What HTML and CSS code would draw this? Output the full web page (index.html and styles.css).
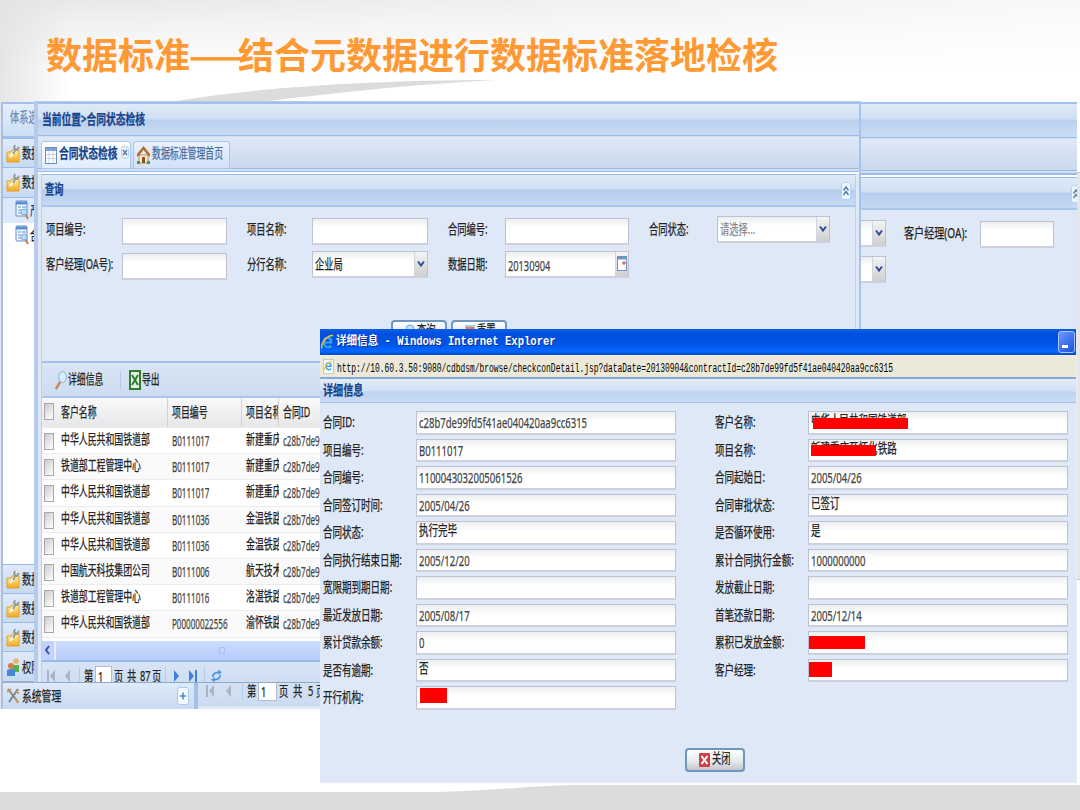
FILE: index.html
```html
<!DOCTYPE html>
<html lang="zh-CN">
<head>
    <meta charset="UTF-8">
    <title>数据标准</title>
    <link rel="stylesheet" href="styles.css">
</head>
<body>
<svg class="defs" width="0" height="0">
    <linearGradient id="gold" x1="0" y1="0" x2="0" y2="1"><stop offset="0" stop-color="#fff0a0"/><stop offset="1" stop-color="#f0a91e"/></linearGradient>
    <symbol id="folder" viewBox="0 0 14 20">
        <path d="M1 9h4l1-2h7v12H1z" fill="url(#gold)" stroke="#e0a030"/>
        <path d="M4 14l6-7" stroke="#fff" stroke-width="2"/>
        <path d="M7 11l3-5M9 2l-1 3 3 2 2-3" fill="none" stroke="#8f959c" stroke-width="1.8"/>
    </symbol>
    <symbol id="doc" viewBox="0 0 14 20">
        <rect x="1" y="1" width="11" height="15" rx="1" fill="#f4f9ff" stroke="#5b8fd0"/>
        <path d="M1 3h11" stroke="#5b8fd0" stroke-width="3"/>
        <path d="M3 7h3M3 10h3M3 13h3M7 7h4" stroke="#5a90cf"/>
        <circle cx="9" cy="12" r="3" fill="#b9dcfa" stroke="#7ba9d8"/>
        <path d="M11 15l2 4" stroke="#d07a3a" stroke-width="2"/>
    </symbol>
    <symbol id="first" viewBox="0 0 9 14"><path d="M1 1v12" stroke="currentColor" stroke-width="2"/><path d="M8 1v12L3 7z" fill="currentColor"/></symbol>
    <symbol id="prev" viewBox="0 0 9 14"><path d="M7 1v12L2 7z" fill="currentColor"/></symbol>
    <symbol id="arrow" viewBox="0 0 8 8"><path d="M1 1l3 4 3-4" fill="none" stroke="#2f4f9c" stroke-width="2"/></symbol>
    <symbol id="collapse" viewBox="0 0 10 18">
        <rect x=".5" y=".5" width="9" height="17" rx="2" fill="#eef6ff" stroke="#b5d2f2"/>
        <path d="M2.500 8.500L5 5l2.500 3.500M2.500 13L5 9.500 7.500 13" fill="none" stroke="#4a7fae" stroke-width="1.400"/>
    </symbol>
    <symbol id="ie" viewBox="0 0 14 18">
        <path d="M11 13c-2 3-8 2-8-4s7-6 8-1v1.500H4" fill="none" stroke="#38a3ee" stroke-width="2.300"/>
        <path d="M1 16C-1 11 7 1 13 2" fill="none" stroke="#f5c531" stroke-width="1.600"/>
    </symbol>
</svg>

<div class="slide">
    <svg class="swoosh" width="1080" height="810">
        <path d="M170 102C250 88 370 80 495 80C420 84 340 92 262 102z" fill="#dcdcdc"/>
        <path d="M0 792H440C500 790 530 786 575 785H1080V810H0z" fill="#dcdcdc"/>
    </svg>
    <h1>数据标准<span class="dash">——</span>结合元数据进行数据标准落地检核</h1>

    <div class="win back">
        <div class="sidebar">
            <div class="side-tab"><span class="t">体系选</span></div>
            <div class="acc"><svg class="ic"><use href="#folder"/></svg><span class="t">数据</span></div>
            <div class="acc"><svg class="ic"><use href="#folder"/></svg><span class="t">数据</span></div>
            <div class="tree">
                <div class="node on"><svg class="ic"><use href="#doc"/></svg><span class="t">产品</span></div>
                <div class="node"><svg class="ic"><use href="#doc"/></svg><span class="t">合同</span></div>
            </div>
            <div class="acc"><svg class="ic"><use href="#folder"/></svg><span class="t">数据</span></div>
            <div class="acc"><svg class="ic"><use href="#folder"/></svg><span class="t">数据</span></div>
            <div class="acc"><svg class="ic"><use href="#folder"/></svg><span class="t">数据</span></div>
            <div class="acc">
                <svg class="ic" viewBox="0 0 14 20"><circle cx="10" cy="4" r="2.800" fill="#eab36c"/><path d="M6 8h7v7H7z" fill="#58b04c"/><circle cx="5" cy="9" r="3" fill="#d97c3b"/><path d="M1 13q4-2 8 0v6H1z" fill="#4289dc"/></svg>
                <span class="t">权限</span>
            </div>
            <div class="acc last">
                <svg class="ic" viewBox="0 0 14 20"><path d="M2 3l10 13M12 3L3 16" stroke="#7f868d" stroke-width="2"/><path d="M1 6l4-3M10 6l3 1M9 12l3 5" stroke="#c39c5c" stroke-width="2"/></svg>
                <span class="t">系统管理</span>
                <svg class="plus" viewBox="0 0 12 18"><rect x=".5" y=".5" width="11" height="17" rx="2" fill="#f2f8ff" stroke="#a9c9ee"/><path d="M3 9h6M6 5.500v7" stroke="#4e86c2" stroke-width="1.500"/></svg>
            </div>
        </div>
        <div class="main">
            <div class="bar"></div>
            <div class="tabs"></div>
            <div class="panel-title"><svg class="collapse"><use href="#collapse"/></svg></div>
            <div class="back-form">
                <div class="row">
                    <div class="field select"><b><svg><use href="#arrow"/></svg></b></div>
                    <span class="t lbl">客户经理(OA):</span>
                    <div class="field"></div>
                </div>
                <div class="row">
                    <div class="field select"><b><svg><use href="#arrow"/></svg></b></div>
                </div>
            </div>
            <div class="pager">
                <svg class="nav"><use href="#first"/></svg>
                <svg class="nav"><use href="#prev"/></svg>
                <i class="sep"></i>
                <span class="t w11">第</span><div class="page"><span class="t">1</span></div>
                <span class="t w14">页</span><span class="t w15">共</span><span class="t w8">5</span><span class="t">页</span>
            </div>
        </div>
    </div>

    <div class="win middle">
        <div class="bar"><span class="t b">当前位置&gt;合同状态检核</span></div>
        <div class="tabs">
            <div class="tab active">
                <svg width="12" height="17" viewBox="0 0 12 17"><rect x=".5" y=".5" width="11" height="16" fill="#fff" stroke="#6f8fb8"/><path d="M1 2.500h10" stroke="#7ea6da" stroke-width="3"/><path d="M1 7.500h10M1 11.500h10M4 4v12M8 4v12" stroke="#c5d3e4"/></svg>
                <span class="t b">合同状态检核</span>
                <svg class="x" width="8" height="14" viewBox="0 0 8 14"><rect x=".5" y=".5" width="7" height="12" rx="2" fill="#e6f0fc" stroke="#b4d0f0"/><path d="M2 4l4 5M6 4L2 9" stroke="#4e78a8" stroke-width="1.300"/></svg>
            </div>
            <div class="tab">
                <svg width="13" height="18" viewBox="0 0 13 18"><path d="M2 9h9v8H2z" fill="#f5ead3" stroke="#b59466"/><path d="M0 10l6.500-8 6.500 8" fill="none" stroke="#b36c2b" stroke-width="2.500"/><path d="M5 11h3v6H5z" fill="#8b5229"/><path d="M0 15h3v3H0zM10 15h3v3h-3z" fill="#4d9b3c"/></svg>
                <span class="t">数据标准管理首页</span>
            </div>
        </div>
        <div class="body">
            <div class="panel-title"><span class="t b">查询</span><svg class="collapse"><use href="#collapse"/></svg></div>
            <div class="form">
                <span class="t">项目编号:</span><div class="field w105"></div>
                <span class="t">项目名称:</span><div class="field w116"></div>
                <span class="t">合同编号:</span><div class="field w124"></div>
                <span class="t">合同状态:</span><div class="field select up"><span class="t hint">请选择...</span><b><svg><use href="#arrow"/></svg></b></div>
                <span class="t">客户经理(OA号):</span><div class="field w105"></div>
                <span class="t">分行名称:</span><div class="field select w116 up"><span class="t">企业局</span><b><svg><use href="#arrow"/></svg></b></div>
                <span class="t">数据日期:</span><div class="field select w124 up"><span class="t num">20130904</span><b><svg class="cal" viewBox="0 0 10 16"><rect x=".5" y=".5" width="9" height="14" fill="#fff" stroke="#6f94bf"/><path d="M1 2h8" stroke="#6f94bf" stroke-width="3"/><circle cx="7" cy="7" r="1.800" fill="#d66"/></svg></b></div>
            </div>
            <div class="buttons">
                <div class="btn"><svg width="10" height="16" viewBox="0 0 10 16"><circle cx="5" cy="6" r="4" fill="#bfe4fb" stroke="#6ea8da"/></svg><span class="t">查询</span></div>
                <div class="btn"><svg width="10" height="16" viewBox="0 0 10 16"><rect x="0" y="2" width="10" height="10" fill="#a9c6ec"/><rect x="1" y="4" width="8" height="7" fill="#ee7b3c"/></svg><span class="t">重置</span></div>
            </div>
            <div class="toolbar">
                <svg width="12" height="20" viewBox="0 0 12 20"><path d="M1 19l4-7" stroke="#c98352" stroke-width="2.500"/><ellipse cx="7.500" cy="7" rx="3.800" ry="5.500" fill="#d6effd" stroke="#7fb2e0"/></svg>
                <span class="t w52">详细信息</span><i class="sep"></i>
                <svg width="12" height="20" viewBox="0 0 12 20"><rect x="1" y="1" width="10" height="18" fill="#e3f1df" stroke="#2f7d35" stroke-width="2"/><path d="M3 5l6 10M9 5L3 15" stroke="#2f7d35" stroke-width="2"/></svg>
                <span class="t">导出</span>
            </div>
            <div class="grid">
                <div class="tr th"><i class="ck"></i><span><em class="t">客户名称</em></span><span><em class="t">项目编号</em></span><span><em class="t">项目名称</em></span><span><em class="t">合同ID</em></span></div>
                <div class="tr"><i class="ck"></i><span><em class="t">中华人民共和国铁道部</em></span><span><em class="t n">B0111017</em></span><span><em class="t">新建重庆</em></span><span><em class="t n">c28b7de99</em></span></div>
                <div class="tr"><i class="ck"></i><span><em class="t">铁道部工程管理中心</em></span><span><em class="t n">B0111017</em></span><span><em class="t">新建重庆</em></span><span><em class="t n">c28b7de99</em></span></div>
                <div class="tr"><i class="ck"></i><span><em class="t">中华人民共和国铁道部</em></span><span><em class="t n">B0111017</em></span><span><em class="t">新建重庆</em></span><span><em class="t n">c28b7de99</em></span></div>
                <div class="tr"><i class="ck"></i><span><em class="t">中华人民共和国铁道部</em></span><span><em class="t n">B0111036</em></span><span><em class="t">金温铁路</em></span><span><em class="t n">c28b7de99</em></span></div>
                <div class="tr"><i class="ck"></i><span><em class="t">中华人民共和国铁道部</em></span><span><em class="t n">B0111036</em></span><span><em class="t">金温铁路</em></span><span><em class="t n">c28b7de99</em></span></div>
                <div class="tr"><i class="ck"></i><span><em class="t">中国航天科技集团公司</em></span><span><em class="t n">B0111006</em></span><span><em class="t">航天技术</em></span><span><em class="t n">c28b7de99</em></span></div>
                <div class="tr"><i class="ck"></i><span><em class="t">铁道部工程管理中心</em></span><span><em class="t n">B0111016</em></span><span><em class="t">洛湛铁路</em></span><span><em class="t n">c28b7de99</em></span></div>
                <div class="tr"><i class="ck"></i><span><em class="t">中华人民共和国铁道部</em></span><span><em class="t n">P00000022556</em></span><span><em class="t">渝怀铁路</em></span><span><em class="t n">c28b7de9e</em></span></div>
            </div>
            <div class="scroll"><b><svg width="7" height="12" viewBox="0 0 7 12"><path d="M5 2L2 6l3 4" fill="none" stroke="#33539c" stroke-width="2"/></svg></b><div class="thumb"><i></i></div></div>
            <div class="pager">
                <svg class="nav"><use href="#first"/></svg>
                <svg class="nav"><use href="#prev"/></svg>
                <i class="sep"></i>
                <span class="t w11">第</span><div class="page"><span class="t">1</span></div>
                <span class="t w13">页</span><span class="t w13">共</span><span class="t w12">87</span><span class="t w13">页</span>
                <i class="sep"></i>
                <svg class="nav blue flip"><use href="#prev"/></svg>
                <svg class="nav blue flip"><use href="#first"/></svg>
                <i class="sep"></i>
                <svg class="refresh" viewBox="0 0 12 14"><path d="M2 8q0-5 7-5M10 6q0 5-7 5" fill="none" stroke="#4f97dd" stroke-width="2"/><path d="M8 0l4 3-4 3zM4 8l-4 3 4 3z" fill="#4f97dd"/></svg>
            </div>
        </div>
    </div>

    <div class="win modal">
        <div class="titlebar"><svg width="13" height="18"><use href="#ie"/></svg><span class="t">详细信息 - Windows Internet Explorer</span><div class="min"></div></div>
        <div class="address"><div class="pageicon"><svg width="9" height="12"><use href="#ie"/></svg></div><span class="t">http://10.60.3.50:9080/cdbdsm/browse/checkconDetail.jsp?dataDate=20130904&amp;contractId=c28b7de99fd5f41ae040420aa9cc6315</span></div>
        <div class="subtitle"><span class="t b">详细信息</span></div>
        <div class="detail">
            <div class="col">
                <div class="item"><span class="t">合同ID:</span><div class="field"><span class="t num">c28b7de99fd5f41ae040420aa9cc6315</span></div></div>
                <div class="item"><span class="t">项目编号:</span><div class="field"><span class="t num">B0111017</span></div></div>
                <div class="item"><span class="t">合同编号:</span><div class="field"><span class="t num">1100043032005061526</span></div></div>
                <div class="item"><span class="t">合同签订时间:</span><div class="field"><span class="t num">2005/04/26</span></div></div>
                <div class="item"><span class="t">合同状态:</span><div class="field"><span class="t">执行完毕</span></div></div>
                <div class="item"><span class="t">合同执行结束日期:</span><div class="field"><span class="t num">2005/12/20</span></div></div>
                <div class="item"><span class="t">宽限期到期日期:</span><div class="field"></div></div>
                <div class="item"><span class="t">最近发放日期:</span><div class="field"><span class="t num">2005/08/17</span></div></div>
                <div class="item"><span class="t">累计贷款余额:</span><div class="field"><span class="t num">0</span></div></div>
                <div class="item"><span class="t">是否有逾期:</span><div class="field"><span class="t">否</span></div></div>
                <div class="item"><span class="t">开行机构:</span><div class="field"><i class="mask m5"></i></div></div>
            </div>
            <div class="col">
                <div class="item"><span class="t">客户名称:</span><div class="field"><span class="t">中华人民共和国铁道部</span><i class="mask m1"></i></div></div>
                <div class="item"><span class="t">项目名称:</span><div class="field"><span class="t">新建重庆至怀化铁路</span><i class="mask m2"></i></div></div>
                <div class="item"><span class="t">合同起始日:</span><div class="field"><span class="t num">2005/04/26</span></div></div>
                <div class="item"><span class="t">合同审批状态:</span><div class="field"><span class="t">已签订</span></div></div>
                <div class="item"><span class="t">是否循环使用:</span><div class="field"><span class="t">是</span></div></div>
                <div class="item"><span class="t">累计合同执行金额:</span><div class="field"><span class="t num">1000000000</span></div></div>
                <div class="item"><span class="t">发放截止日期:</span><div class="field"></div></div>
                <div class="item"><span class="t">首笔还款日期:</span><div class="field"><span class="t num">2005/12/14</span></div></div>
                <div class="item"><span class="t">累积已发放金额:</span><div class="field"><i class="mask m3"></i></div></div>
                <div class="item"><span class="t">客户经理:</span><div class="field"><i class="mask m4"></i></div></div>
            </div>
        </div>
        <div class="close"><div class="btn"><svg width="11" height="14" viewBox="0 0 11 14"><rect width="11" height="14" rx="1" fill="#cf3f49"/><path d="M2.500 3l6 8M8.500 3l-6 8" stroke="#fff" stroke-width="2"/></svg><span class="t">关闭</span></div></div>
    </div>
    <div class="edge"></div>
</div>
</body>
</html>
```

FILE: styles.css
```css
* {
    box-sizing: border-box;
}
body {
    margin: 0;
    font-family: "Noto Sans", "Noto Sans CJK SC", sans-serif;
    font-size: 14px;
    line-height: 16px;
    color: #222;
}
.defs {
    position: absolute;
}
.slide {
    position: relative;
    width: 1080px;
    height: 810px;
    overflow: hidden;
    background:
        linear-gradient(to right, rgba(228, 226, 227, .9), rgba(255, 255, 255, 0) 70px),
        linear-gradient(to right, rgba(255, 255, 255, 0), rgba(255, 255, 255, .75)),
        linear-gradient(#e9e6e7, #f2f1f1 25px, #fff 70px);
}
.slide::before {
    content: "";
    position: absolute;
    top: 709px;
    left: 0;
    width: 320px;
    height: 83px;
    background: #fff;
}
.swoosh {
    position: absolute;
    top: 0;
    left: 0;
}
h1 {
    position: relative;
    margin: 0;
    padding: 27px 0 0 46px;
    font: bold 36px/52px "Noto Sans CJK SC", sans-serif;
    color: #ff9933;
    white-space: nowrap;
}
.dash {
    display: inline-block;
    width: 48px;
    font-weight: bold;
    transform: scaleX(.86);
    transform-origin: -6px 50%;
}

/* squeezed ui text */
.t {
    display: block;
    flex: none;
    font-style: normal;
    white-space: nowrap;
    transform: scaleX(.66);
    transform-origin: 0 50%;
    -webkit-text-stroke: .25px currentColor;
}
.b {
    font-weight: bold;
    color: #15428b;
}
.num {
    color: #444;
    padding-top: 3px;
}
.w8 { width: 8px; }
.w11 { width: 11px; }
.w12 { width: 12px; }
.w13 { width: 13px; }
.w14 { width: 14px; }
.w15 { width: 15px; }
.w52 { width: 52px; }

.win {
    position: absolute;
    overflow: hidden;
    background: #dfe8f6;
}
.back {
    left: 1px;
    top: 102px;
    width: 1076px;
    height: 607px;
    display: flex;
}
.middle {
    left: 34px;
    top: 101px;
    width: 827px;
    height: 582px;
    border: solid #b4cbee;
    border-width: 1px 1px 1px 4px;
    border-bottom-color: #8fa9cc;
    border-right: 2px solid #a5c3ec;
    display: flex;
    flex-direction: column;
}
.modal {
    left: 320px;
    top: 329px;
    width: 757px;
    height: 454px;
    border-right: 1px solid #e8eef8;
    border-bottom: 1px solid #e8eef8;
}

.bar {
    flex: none;
    height: 34px;
    padding: 7px 0 0 4px;
    border-top: 2px solid #a3c0ea;
    border-bottom: 1px solid #99bbe8;
    background: linear-gradient(#dfeaf6, #cfdff3 15px, #b9d0ee 16px, #c9daf3 30px);
}
.bar .t {
    transform: scaleX(.695);
}
.tabs {
    flex: none;
    height: 38px;
    padding: 4px 0 0 3px;
    border-top: 1px solid #cfe0f5;
    border-bottom: 2px solid #fff;
    background: linear-gradient(#dfe8f6, #c9d9ee 31px, #99bbe8 31px, #99bbe8 32px, #d0dff4 32px, #d0dff4 34px, #99bbe8 34px);
    display: flex;
    gap: 2px;
}
.tab {
    display: flex;
    align-items: center;
    height: 28px;
    width: 97px;
    padding-left: 3px;
    border: 1px solid #a9c6ee;
    border-radius: 3px 3px 0 0;
    background: linear-gradient(#e9f1fc, #d2e1f6);
}
.tab .t {
    width: 65px;
    margin: -5px 0 0 2px;
    color: #4a6e9f;
    transform: scaleX(.635);
}
.tab.active {
    width: 90px;
    background: linear-gradient(#fff, #deecfd);
}
.tab.active .t {
    color: #15428b;
    width: 62px;
    transform: scaleX(.695);
}
.x {
    margin-top: -4px;
}
.panel-title {
    flex: none;
    display: flex;
    justify-content: space-between;
    height: 33px;
    padding: 6px 4px 0 3px;
    border-top: 1px solid #99bbe8;
    border-bottom: 2px solid #a8c5ed;
    background: linear-gradient(#dfeaf6, #d0e0f3 14px, #b5cdec 15px, #c6d9f3);
}
.collapse {
    width: 10px;
    height: 18px;
    margin-top: 1px;
}

/* left menu of the page behind */
.sidebar {
    width: 197px;
    border: solid #a3c0ea;
    border-width: 2px 4px 0 2px;
    display: flex;
    flex-direction: column;
}
.side-tab {
    height: 34px;
    padding: 5px 0 0 7px;
    border-bottom: 2px solid #a3c0ea;
    background: linear-gradient(#e4eefb, #cddff6);
    color: #7088ad;
}
.acc {
    display: flex;
    align-items: center;
    height: 29.3px;
    padding-left: 3px;
    border-top: 1px solid #99bbe8;
    background: linear-gradient(#dfeaf8, #c8daf1);
    flex: none;
}
.acc .t {
    margin-left: 2px;
    width: 141px;
}
.acc.last {
    flex: 1;
    border-top: 2px solid #98aecb;
}
.acc.last .t {
    transform: scaleX(.7);
}
.ic {
    width: 14px;
    height: 20px;
    flex: none;
}
.plus {
    width: 12px;
    height: 18px;
    margin-left: 14px;
}
.tree {
    height: 367px;
    background: #fff;
    border-top: 1px solid #99bbe8;
}
.node {
    display: flex;
    align-items: center;
    height: 25px;
    padding-left: 12px;
}
.node .t {
    margin-left: 1px;
}
.node.on {
    background: #dce9fa;
    color: #15428b;
}
.main {
    flex: 1;
    display: flex;
    flex-direction: column;
    overflow: hidden;
}
.back .bar {
    height: 36px;
}
.back .tabs {
    height: 39px;
}
.back .panel-title {
    justify-content: flex-end;
    padding-right: 0;
    margin-right: -4px;
}
.back-form {
    flex: 1;
    padding: 10px 0 0 636px;
}
.row {
    display: flex;
    height: 36px;
}
.row .lbl {
    width: 76px;
    margin: 5px 0 0 18px;
    transform: scaleX(.72);
}
.row .field {
    width: 74px;
    margin-top: 1px;
}
.row .select {
    width: 52px;
    margin-top: 0;
}

.field {
    position: relative;
    height: 27px;
    padding: 4px 0 0 2px;
    border: 1px solid #bcc2d2;
    border-bottom-width: 2px;
    border-bottom-color: #cdd1de;
    background: linear-gradient(#eceeef, #fff 9px);
}
.select {
    width: 113px;
    display: flex;
    justify-content: space-between;
    padding: 0 0 0 2px;
}
.w105 { width: 105px; }
.w116 { width: 116px; }
.w124 { width: 124px; }
.select .t {
    padding-top: 4px;
    width: 60px;
}
.select .num {
    padding-top: 6px;
}
.select b {
    display: flex;
    align-items: center;
    justify-content: center;
    width: 13px;
    margin-left: auto;
    background: linear-gradient(#f4f4f4, #cfcfcf);
    border-left: 1px solid #d2d6df;
}
.select svg {
    width: 8px;
    height: 9px;
}
.select .cal {
    width: 10px;
    height: 16px;
}
.up {
    margin-top: -2px;
}
.hint {
    color: #888;
}

.body {
    flex: 1;
    margin-left: 3px;
    margin-right: 3px;
    border-left: 1px solid #b9d0ef;
    border-right: 1px solid #b9d0ef;
    display: flex;
    flex-direction: column;
    overflow: hidden;
}
.form {
    display: grid;
    grid-template-columns: 76px 125px 65px 136px 57px 144px 68px 113px;
    grid-auto-rows: 35px;
    padding: 11px 0 0 4px;
    height: 113px;
    flex: none;
}
.form > .t {
    margin-top: 3px;
    transform: scaleX(.66);
}
.buttons {
    display: flex;
    flex: none;
    gap: 4px;
    padding: 0 0 0 349px;
    height: 41px;
}
.btn {
    display: flex;
    align-items: center;
    width: 56px;
    height: 24px;
    padding-left: 12px;
    border: 2px solid #6d97bf;
    border-radius: 4px;
    background: linear-gradient(#fff, #e6e7ea 60%, #c2c4c8);
}
.btn .t {
    margin: -3px 0 0 2px;
    width: 20px;
}
.buttons .btn {
    padding-bottom: 2px;
}
.toolbar {
    flex: none;
    display: flex;
    align-items: center;
    height: 37px;
    padding: 0 0 0 13px;
    border-top: 2px solid #a3c0ea;
    border-bottom: 2px solid #a9c6ee;
    background: linear-gradient(#d9e5f5, #cddcf0);
}
.toolbar .t {
    margin: -2px 0 0 1px;
    transform: scaleX(.63);
}
.sep {
    width: 1px;
    height: 18px;
    background: #b2cdf1;
    flex: none;
}
.toolbar .t + .sep {
    margin-right: 8px;
}
.grid {
    flex: none;
    height: 243px;
    background: #fff;
}
.tr {
    display: grid;
    grid-template-columns: 15px 111px 74px 37px 1fr;
    height: 26.2px;
    border-bottom: 1px solid #ededed;
}
.tr:nth-child(odd) {
    background: #fafafa;
}
.tr span {
    overflow: hidden;
    padding: 3px 0 0 4px;
}
.tr .t {
    transform: scaleX(.635);
}
.tr .n {
    transform: scaleX(.575);
    padding-top: 2px;
    color: #444;
}
.ck {
    width: 10px;
    height: 17px;
    margin: 5px 0 0 2px;
    border: 1px solid #a9a9a9;
    background: linear-gradient(135deg, #ccc, #fff);
}
.tr.th {
    height: 30px;
    background: linear-gradient(#f9f9f9, #e6e7e9);
}
.tr.th span {
    padding-top: 6px;
    border-right: 1px solid #d2d2d2;
}
.scroll {
    display: flex;
    flex: none;
    height: 19px;
    background: #e6edfb;
}
.scroll b {
    width: 12px;
    background: #c3d3fd;
    padding: 2px;
}
.thumb {
    flex: 1;
    margin-left: 2px;
    background: linear-gradient(#cddcff, #b7cbfb);
    padding: 6px 0 0 163px;
}
.thumb i {
    display: block;
    width: 6px;
    height: 7px;
    border: 1px solid #a7bdf4;
}
.pager {
    display: flex;
    align-items: center;
    flex: none;
    height: 30px;
    padding-left: 5px;
    border-top: 2px solid #99bbe8;
    background: linear-gradient(#d8e4f5, #cbdbf0);
}
.nav {
    width: 9px;
    height: 14px;
    margin-right: 7px;
    color: #a9b4c4;
    flex: none;
}
.blue {
    color: #3f7fe0;
}
.flip {
    transform: scaleX(-1);
}
.pager .sep {
    margin-right: 4px;
}
.pager .blue + .sep,
.pager .t + .sep {
    margin-right: 6px;
}
.page {
    width: 17px;
    height: 20px;
    padding: 2px 0 0 2px;
    border: 1px solid #b3bccd;
    background: #fff;
    margin-right: 2px;
    flex: none;
}
.refresh {
    width: 11px;
    height: 14px;
}
.back .pager {
    margin-bottom: 3px;
    padding-left: 8px;
    height: 33px;
}
.back .nav {
    margin-right: 9px;
}
.back .page {
    width: 19px;
}

/* popup window */
.titlebar {
    display: flex;
    align-items: center;
    height: 26px;
    padding-left: 1px;
    background: linear-gradient(#0a5fe8, #0050e0 5px, #0054e6 15px, #0468ff 22px, #0048c8);
    color: #fff;
    font: bold 12px/16px "Liberation Mono", "Noto Sans CJK SC", monospace;
}
.titlebar .t {
    transform: scaleX(.88);
    margin-left: 2px;
    text-shadow: 1px 1px #0a2f93;
    -webkit-text-stroke: 0;
}
.min {
    width: 17px;
    height: 22px;
    margin: 0 1px 0 auto;
    border: 1px solid #a9c4ff;
    border-radius: 3px;
    background: linear-gradient(135deg, #6f98ff, #1c4fdc);
    padding: 13px 0 0 3px;
}
.min::after {
    content: "";
    display: block;
    width: 6px;
    height: 3px;
    background: #fff;
}
.address {
    display: flex;
    align-items: center;
    height: 24px;
    padding-left: 3px;
    border-top: 1px solid #f5f3e8;
    border-bottom: 2px solid #86a8d4;
    background: #ece9d8;
    font: 12px/16px "Liberation Mono", monospace;
    color: #000;
}
.address .t {
    transform: scaleX(.66);
    margin: 4px 0 0 3px;
    -webkit-text-stroke: 0;
}
.pageicon {
    width: 11px;
    height: 15px;
    background: #fff;
    border: 1px solid #c9c9c0;
}
.pageicon svg {
    display: block;
}
.subtitle {
    height: 24px;
    padding: 3px 0 0 3px;
    border-bottom: 1px solid #a4c2ec;
    background: linear-gradient(#e3edf9, #d0e0f4 12px, #bfd4f0 13px, #c9dbf4);
}
.subtitle .t {
    transform: scaleX(.72);
}
.detail {
    display: flex;
    gap: 39px;
    padding: 8px 0 0 3px;
}
.col {
    width: 353px;
}
.item {
    display: flex;
    height: 27.5px;
}
.item > .t {
    width: 93px;
    padding-top: 3px;
    transform: scaleX(.68);
}
.item .field {
    width: 260px;
    height: 23.5px;
    padding-top: 0;
}
.item .field .t {
    transform: scaleX(.68);
}
.mask {
    position: absolute;
    background: #f00;
}
.m1 { left: 4px; top: 6px; width: 95px; height: 11px; }
.m2 { left: 2px; top: 5px; width: 65px; height: 11px; }
.m3 { left: 0; top: 4px; width: 56px; height: 13px; }
.m4 { left: 0; top: 2px; width: 23px; height: 15px; }
.m5 { left: 3px; top: 1px; width: 27px; height: 15px; }
.close {
    padding: 34px 0 0 365px;
}
.close .btn {
    width: 60px;
}
.edge {
    position: absolute;
    left: 1077px;
    top: 172px;
    width: 3px;
    height: 408px;
    background: #e6e6e6;
    border-top: 1px solid #c4c4c4;
    border-bottom: 1px solid #c4c4c4;
}
```
